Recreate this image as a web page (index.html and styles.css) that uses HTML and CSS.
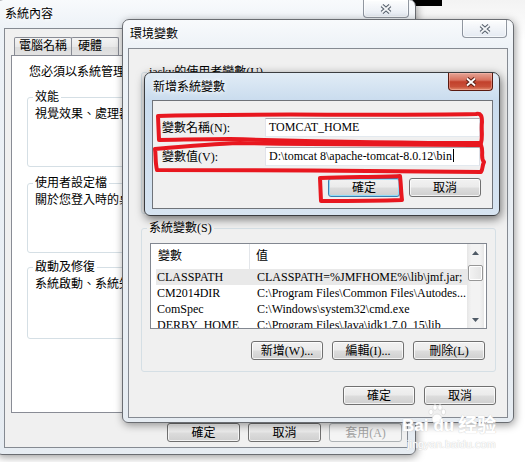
FILE: index.html
```html
<!DOCTYPE html>
<html lang="zh-Hant">
<head>
<meta charset="UTF-8" />
<title>環境變數</title>
<link rel="stylesheet" href="styles.css">
</head>
<body>
<div class="desk">
  <div class="blackbar"></div>

  <!-- 系統內容 -->
  <section class="window win-sys">
    <header class="titlebar">
      <span class="title">系統內容</span>
      <span class="close"><svg width="12" height="10" viewBox="0 0 12 10"><path d="M2 1.5 L10 8.5 M10 1.5 L2 8.5" class="x-out"/><path d="M2 1.5 L10 8.5 M10 1.5 L2 8.5" class="x-in"/></svg></span>
    </header>
    <div class="client">
      <div class="tabs">
        <span class="tab">電腦名稱</span>
        <span class="tab tab-wide">硬體</span>
      </div>
      <div class="tab-page">
        <p class="intro">您必須以系統管理員身分登入，才能進行大部分的變更。</p>
        <div class="group g1">
          <span class="group-title">效能</span>
          <p>視覺效果、處理器排程、記憶體使用方式，以及虛擬記憶體</p>
        </div>
        <div class="group g2">
          <span class="group-title">使用者設定檔</span>
          <p>關於您登入時的桌面設定</p>
        </div>
        <div class="group g3">
          <span class="group-title">啟動及修復</span>
          <p>系統啟動、系統失敗及偵錯資訊</p>
        </div>
      </div>
      <div class="buttons">
        <button class="btn">確定</button>
        <button class="btn">取消</button>
        <button class="btn" disabled>套用(A)</button>
      </div>
    </div>
  </section>

  <!-- 環境變數 -->
  <section class="window win-env">
    <header class="titlebar">
      <span class="title">環境變數</span>
      <span class="close"><svg width="12" height="10" viewBox="0 0 12 10"><path d="M2 1.5 L10 8.5 M10 1.5 L2 8.5" class="x-out"/><path d="M2 1.5 L10 8.5 M10 1.5 L2 8.5" class="x-in"/></svg></span>
    </header>
    <div class="client">
      <div class="group user">
        <span class="group-title">jasky的使用者變數(U)</span>
      </div>
      <div class="group system">
        <span class="group-title">系統變數(S)</span>
        <div class="listview">
          <div class="list-body">
            <div class="list-head">
              <span class="col1">變數</span>
              <span class="col2">值</span>
            </div>
            <div class="row sel"><span class="col1">CLASSPATH</span><span>CLASSPATH=%JMFHOME%\lib\jmf.jar;</span></div>
            <div class="row"><span class="col1">CM2014DIR</span><span>C:\Program Files\Common Files\Autodes...</span></div>
            <div class="row"><span class="col1">ComSpec</span><span>C:\Windows\system32\cmd.exe</span></div>
            <div class="row"><span class="col1">DERBY_HOME</span><span>C:\Program Files\Java\jdk1.7.0_15\lib</span></div>
          </div>
          <div class="scrollbar">
            <span class="arrow"><svg width="7" height="4" viewBox="0 0 7 4"><path d="M0 4 L3.5 0 L7 4 Z"/></svg></span>
            <span class="thumb"></span>
            <span class="track"></span>
            <span class="arrow"><svg width="7" height="4" viewBox="0 0 7 4"><path d="M0 0 L3.5 4 L7 0 Z"/></svg></span>
          </div>
        </div>
        <div class="group-buttons">
          <button class="btn">新增(W)...</button>
          <button class="btn">編輯(I)...</button>
          <button class="btn">刪除(L)</button>
        </div>
      </div>
      <div class="buttons">
        <button class="btn">確定</button>
        <button class="btn">取消</button>
      </div>
    </div>
  </section>

  <!-- 新增系統變數 -->
  <section class="window win-add">
    <header class="titlebar">
      <span class="title">新增系統變數</span>
      <span class="close close-red"><svg width="12" height="10" viewBox="0 0 12 10"><path d="M2 1.5 L10 8.5 M10 1.5 L2 8.5" class="x-out"/><path d="M2 1.5 L10 8.5 M10 1.5 L2 8.5" class="x-in"/></svg></span>
    </header>
    <div class="client">
      <div class="form">
        <label>變數名稱(N):</label>
        <div class="field">TOMCAT_HOME</div>
        <label>變數值(V):</label>
        <div class="field">D:\tomcat 8\apache-tomcat-8.0.12\bin<span class="caret"></span></div>
      </div>
      <div class="buttons">
        <button class="btn btn-default">確定</button>
        <button class="btn">取消</button>
      </div>
    </div>
  </section>

  <!-- watermark -->
  <div class="watermark">
    <div class="wm-logo">
      <span>Bai</span>
      <svg class="paw" width="20" height="20" viewBox="0 0 20 20">
        <ellipse cx="4" cy="8" rx="2.2" ry="2.8"/>
        <ellipse cx="8" cy="3.5" rx="2.2" ry="2.8"/>
        <ellipse cx="13" cy="3.5" rx="2.2" ry="2.8"/>
        <ellipse cx="16.5" cy="8" rx="2.2" ry="2.8"/>
        <path d="M10 10 C6 10 4 15 5.5 17.5 C7 19.5 13 19.5 14.5 17.5 C16 15 14 10 10 10 Z"/>
      </svg>
      <span>du</span>
      <span class="wm-cn">经验</span>
    </div>
    <div class="wm-url">jingyan.baidu.com</div>
  </div>

  <!-- hand-drawn marks -->
  <svg class="marks" width="525" height="462" viewBox="0 0 525 462">
    <path d="M159 140 L158 116 C240 113 380 116 476 114 C481 113 482 116 482 122 C481 130 483 136 481 143 C400 143 300 141 230 139 C200 139 175 140 159 140 Z"/>
    <path d="M157 170 C155 162 156 155 155 149 C190 146 215 144 240 143 C320 145 400 144 481 145 C484 152 480 158 484 162 C482 166 483 169 481 172 C380 171 260 170 157 170 Z"/>
    <path d="M321 201 L320 178 C350 177 380 177 400 176 C401 184 401 192 402 200 C375 201 345 201 321 201 Z"/>
  </svg>
</div>
</body>
</html>
```

FILE: styles.css
```css
* { box-sizing: border-box; }
body {
  margin: 0;
  background: #fff;
  color: #000;
  font: 12px/14px "Liberation Serif", "Noto Sans CJK TC", serif;
}
p { margin: 0; }
.desk {
  position: relative;
  width: 525px; height: 462px;
  overflow: hidden;
  background: linear-gradient(#f3f3f3, #fff 40px);
}
.blackbar {
  position: absolute; left: 413px; top: 0;
  width: 29px; height: 6px;
  background: #000;
}

/* Windows */
.window {
  position: absolute;
  display: flex; flex-direction: column;
  border: 1px solid #6a6d72;
  border-radius: 7px 7px 6px 6px;
  background: linear-gradient(180deg, #f8fafc 0%, #edf2f7 28px, #e6ecf2 100%);
  box-shadow: 1px 2px 9px rgba(0,0,0,0.4);
}
.win-sys { left: -4px; top: -1px; width: 420px; height: 456px; }
.win-env { left: 122px; top: 19px; width: 392px; height: 404px; }
.win-add {
  left: 144px; top: 72px; width: 356px; height: 144px;
  border-color: #3b3d40;
  background: linear-gradient(180deg, #e1ecf6 0%, #cadcee 27px, #d7e4f1 100%);
  box-shadow: 1px 3px 10px rgba(0,0,0,0.55);
}
.titlebar {
  flex: none;
  height: 28px;
  display: flex; justify-content: space-between; align-items: flex-start;
  padding: 0 6px 0 8px;
}
.win-env .titlebar { padding-left: 7px; }
.win-add .titlebar { height: 27px; }
.title {
  padding-top: 7px;
  text-shadow: 0 0 4px #fff, 0 0 7px #fff;
}
.close {
  width: 45px; height: 18px;
  display: flex; align-items: center; justify-content: center;
  border: 1px solid rgba(60,70,85,0.55); border-top: none;
  border-radius: 0 0 4px 4px;
  background: linear-gradient(rgba(255,255,255,0.7), rgba(225,232,240,0.8));
  box-shadow: inset 0 0 0 1px rgba(255,255,255,0.6);
}
.win-sys .close { width: 46px; }
.close svg { fill: none; }
.x-out { stroke: #56606c; stroke-width: 4; }
.x-in { stroke: #f4f6f8; stroke-width: 1.8; }
.close-red {
  border-color: #5a1a10;
  background: linear-gradient(#e5a596 0%, #d7705d 42%, #c2402b 52%, #c85039 80%, #e28a6c 100%);
  box-shadow: inset 0 0 0 1px rgba(255,200,190,0.4);
}
.close-red .x-out { stroke: #5b2016; }
.close-red .x-in { stroke: #fff; }

.client {
  flex: 1;
  display: flex; flex-direction: column;
  background: #f0f0f0;
  border: 1px solid #858a92;
}
.win-sys .client { margin: 0 7px 6px 7px; }
.win-env .client { margin: 0 5px 4px 5px; }
.win-add .client { margin: 0 6px 6px 7px; border-color: #6f7379; }

/* Buttons */
.buttons {
  display: flex; justify-content: flex-end;
  gap: 8px;
  margin-top: 10px;
  padding-right: 5px;
}
.btn {
  width: 73px; height: 19px;
  padding: 0;
  font: inherit; line-height: 16px; color: #000;
  border: 1px solid #707070;
  border-radius: 3px;
  background: linear-gradient(#f2f2f2 0%, #ebebeb 48%, #dddddd 52%, #cfcfcf 100%);
  box-shadow: inset 0 0 0 1px rgba(255,255,255,0.75);
}
.btn:disabled {
  color: #a3a3a3;
  border-color: #adb2b5;
  background: #f4f4f4;
  box-shadow: none;
}
.btn-default {
  border-color: #3c7fb1;
  box-shadow: inset 0 0 0 1px #8fdcf7;
}
.win-env .btn, .win-add .btn { width: 72px; }
.win-env .buttons { margin-top: 14px; padding-right: 11px; gap: 9px; }
.win-add .buttons { margin-top: 12px; padding-right: 11px; gap: 9px; }

/* Tabs */
.tabs {
  display: flex;
  padding: 8px 0 0 9px;
}
.tab {
  height: 18px;
  padding: 0 4px;
  line-height: 17px;
  border: 1px solid #898c95; border-bottom: none;
  border-radius: 2px 2px 0 0;
  margin-right: -1px;
  background: linear-gradient(#f4f4f4, #e9e9e9 50%, #dcdcdc 51%, #e2e2e2);
}
.tab-wide { padding: 0 16px 0 6px; }
.tab-page {
  height: 358px;
  margin: 0 6px;
  padding: 9px 15px 0;
  background: #fff;
  border: 1px solid #898c95;
  white-space: nowrap;
}
.intro { padding-left: 2px; }

/* Group boxes */
.group {
  border: 1px solid #d5dfe5;
  border-radius: 3px;
}
.group-title {
  display: block;
  width: fit-content;
  margin: -8px 0 0 5px;
  padding: 0 2px;
  line-height: 14px;
  background: #f0f0f0;
  white-space: nowrap;
}
.tab-page .group-title { background: #fff; }
.group p { margin: 3px 0 0 7px; }
.g1 { margin-top: 18px; height: 70px; }
.g2 { margin-top: 16px; height: 70px; }
.g3 { margin-top: 14px; height: 72px; }
.user { margin: 23px 11px 0 12px; height: 142px; }
.system { margin: 14px 11px 0 12px; }

/* List view */
.listview {
  display: flex;
  height: 86px;
  margin: 8px 8px 0;
  border: 1px solid #828790;
  background: #fff;
}
.list-body {
  flex: 1; min-width: 0;
  overflow: hidden;
  white-space: nowrap;
}
.list-head {
  display: flex;
  height: 25px;
}
.list-head span { line-height: 25px; }
.list-head .col1 {
  width: 99px;
  padding-left: 7px;
  border-right: 1px solid #e3e6ea;
}
.list-head .col2 { padding-left: 6px; }
.row {
  display: flex;
  height: 16px;
  line-height: 16px;
  margin-left: 5px;
}
.row .col1 { flex: none; width: 101px; padding-left: 1px; }
.row.sel { background: #e9e9e9; }
.scrollbar {
  flex: none;
  width: 17px;
  margin-right: 2px;
  display: flex; flex-direction: column;
  background: linear-gradient(to right, #e6e6e6, #f3f3f3 25%, #f3f3f3 75%, #e6e6e6);
}
.arrow {
  height: 17px;
  display: flex; align-items: center; justify-content: center;
}
.arrow svg { fill: #4f5a66; }
.thumb {
  height: 16px;
  margin: 4px 1px 0;
  border: 1px solid #979797;
  border-radius: 2px;
  background: linear-gradient(to right, #f3f3f3, #e4e4e4);
  box-shadow: inset 0 0 0 1px #fff;
}
.track { flex: 1; }
.group-buttons {
  display: flex; justify-content: flex-end;
  gap: 9px;
  margin: 12px 10px 11px 0;
}

/* Form */
.form {
  display: grid;
  grid-template-columns: 103px 1fr;
  row-gap: 10px;
  align-items: center;
  padding: 17px 12px 0 9px;
}
.field {
  height: 19px;
  padding: 0 3px;
  line-height: 17px;
  white-space: nowrap;
  background: #fff;
  border: 1px solid;
  border-color: #abadb3 #dbdfe6 #e3e9ef #e2e3ea;
}
.caret {
  display: inline-block;
  width: 1px; height: 13px;
  margin-left: 1px;
  vertical-align: -2px;
  background: #000;
}

/* Watermark */
.watermark {
  position: absolute; left: 402px; top: 404px;
  color: #fff;
  text-shadow: 0 0 1px #d2d2d2, 0 0 1px #d2d2d2;
}
.wm-logo {
  display: flex; align-items: flex-end;
  height: 30px;
  font: bold 17px/17px "Liberation Sans", "Noto Sans CJK SC", sans-serif;
}
.paw {
  margin: 0 -14px 0 -1px;
  align-self: flex-start;
  fill: #fff;
  stroke: #dadada;
  stroke-width: 0.8;
}
.wm-cn { margin-left: 4px; font-size: 19px; }
.wm-url {
  margin: 5px 0 0 5px;
  font: 11px/11px "Liberation Sans", sans-serif;
}

/* Red marks */
.marks {
  position: absolute; left: 0; top: 0;
  pointer-events: none;
}
.marks path {
  fill: none;
  stroke: #e8171f;
  stroke-width: 4;
  stroke-linejoin: round;
}
```
